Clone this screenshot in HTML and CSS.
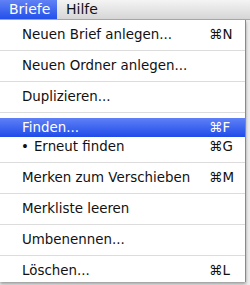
FILE: index.html
```html
<!DOCTYPE html>
<html lang="de">
<head>
    <meta charset="UTF-8" />
    <title>Briefe</title>
    <link rel="stylesheet" href="styles.css">
</head>
<body>
    <div class="menubar">
        <div class="title active">Briefe</div>
        <div class="title">Hilfe</div>
    </div>
    <div class="menu">
        <div class="item"><span>Neuen Brief anlegen...</span><span class="key">&#8984;N</span></div>
        <div class="sep"></div>
        <div class="item"><span>Neuen Ordner anlegen...</span></div>
        <div class="sep"></div>
        <div class="item"><span>Duplizieren...</span></div>
        <div class="sep"></div>
        <div class="item selected"><span>Finden...</span><span class="key">&#8984;F</span></div>
        <div class="item"><span><span class="dot">&bull;</span>Erneut finden</span><span class="key">&#8984;G</span></div>
        <div class="sep"></div>
        <div class="item"><span>Merken zum Verschieben</span><span class="key">&#8984;M</span></div>
        <div class="sep"></div>
        <div class="item"><span>Merkliste leeren</span></div>
        <div class="sep"></div>
        <div class="item"><span>Umbenennen...</span></div>
        <div class="sep"></div>
        <div class="item"><span>Löschen...</span><span class="key">&#8984;L</span></div>
    </div>
</body>
</html>
```

FILE: styles.css
```css
*{margin:0;padding:0;box-sizing:border-box;}
body{
    width:250px;
    height:285px;
    overflow:hidden;
    background:#ededed;
    font-family:"DejaVu Sans","Liberation Sans",sans-serif;
    font-size:13.4px;
    color:#111;
}
.menubar{
    height:20px;
    display:flex;
    background:linear-gradient(#f4f4f4,#d6d6d6);
    border-bottom:1px solid #a9a9a9;
}
.menubar .title{
    padding:0 9px;
    line-height:19px;
    font-size:14px;
}
.menubar .title.active{
    width:57px;
    flex:none;
    background:linear-gradient(#6181f5,#2350ea);
    color:#fff;
}
.menu{
    width:246px;
    height:262px;
    padding-top:5px;
    background:#fff;
    border-right:1px solid #8a8a8a;
    box-shadow:0 2px 3px rgba(0,0,0,0.35);
}
.menu .item{
    height:19px;
    display:flex;
    align-items:center;
    justify-content:space-between;
    padding:0 8px 0 22px;
}
.menu .item.selected{
    background:linear-gradient(#5f80f6,#1f4ce9);
    color:#fff;
}
.menu .dot{margin-left:-1px;margin-right:5px;}
.menu .key{width:28px;}
.menu .sep{
    height:12px;
    display:flex;
    align-items:center;
}
.menu .sep::after{
    content:"";
    flex:1;
    height:1px;
    background:#dcdcdc;
}
```
